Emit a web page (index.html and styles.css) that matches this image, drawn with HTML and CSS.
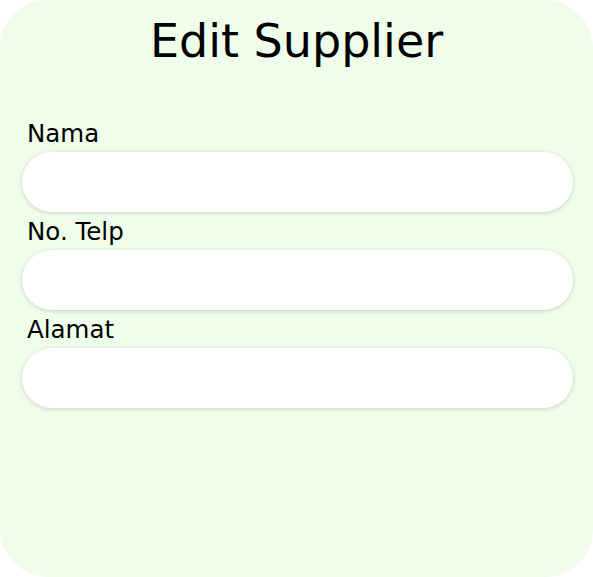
FILE: index.html
```html
<!DOCTYPE html>
<html lang="id">
<head>
<meta charset="utf-8">
<title>Edit Supplier</title>
<link rel="stylesheet" href="styles.css">
</head>
<body>
<div class="card">
  <h1 class="title">Edit Supplier</h1>
  <form class="form">
    <div class="field">
      <label class="label" for="nama">Nama</label>
      <input class="input" id="nama" type="text">
    </div>
    <div class="field">
      <label class="label" for="telp">No. Telp</label>
      <input class="input" id="telp" type="text">
    </div>
    <div class="field">
      <label class="label" for="alamat">Alamat</label>
      <input class="input" id="alamat" type="text">
    </div>
  </form>
</div>
</body>
</html>
```

FILE: styles.css
```css
html, body {
  margin: 0;
  padding: 0;
  background: #ffffff;
}

.card {
  box-sizing: border-box;
  width: 593px;
  height: 577px;
  background: #effeeb;
  border-radius: 48px;
  padding-top: 14px;
  font-family: "DejaVu Sans", sans-serif;
  color: #000000;
  display: flex;
  flex-direction: column;
}

.title {
  margin: 0;
  font-size: 46px;
  font-weight: normal;
  line-height: 54px;
  text-align: center;
}

.form {
  margin: 52px 0 0 0;
  padding: 0 20px 0 22px;
  display: flex;
  flex-direction: column;
  gap: 6px;
}

.field {
  display: flex;
  flex-direction: column;
}

.label {
  font-size: 24.5px;
  line-height: 28px;
  padding-left: 5px;
  margin-bottom: 4px;
}

.input {
  box-sizing: border-box;
  width: 100%;
  height: 60px;
  border: none;
  border-radius: 30px;
  background: #ffffff;
  box-shadow: 0 1px 4px rgba(0, 0, 0, 0.18);
  outline: none;
  padding: 0 24px;
  font-family: inherit;
  font-size: 18px;
}
```
